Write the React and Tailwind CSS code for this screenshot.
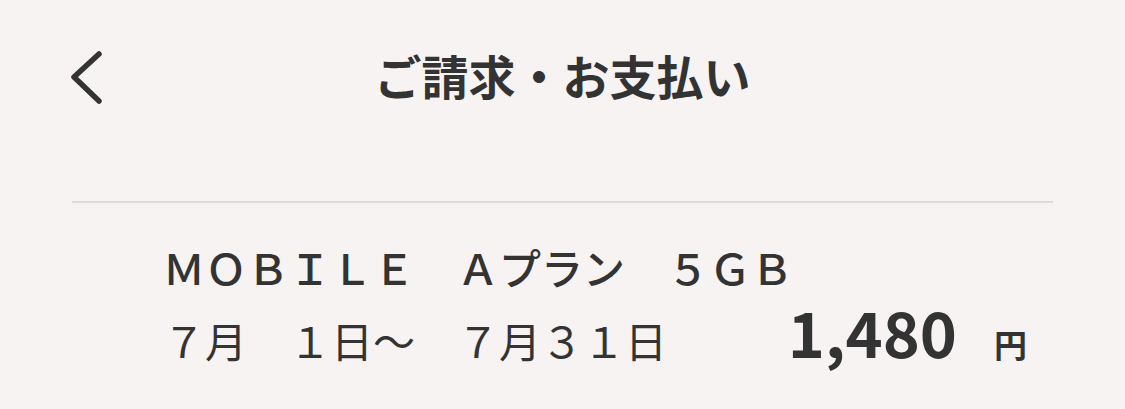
const FONT = "font-['Noto_Sans_CJK_JP','Noto_Sans',sans-serif]";

const BackIcon = () => (
  <svg width="40" height="60" viewBox="0 0 40 60" fill="none">
    <path
      d="M31 6 L6 29 L31 53"
      stroke="#333333"
      strokeWidth="5.5"
      strokeLinecap="round"
      strokeLinejoin="round"
    />
  </svg>
);

export default function App() {
  return (
    <div className={`h-[409px] w-full overflow-hidden bg-[#f6f3f2] text-[#333333] ${FONT}`}>
      <header className="grid h-[148px] grid-cols-[1fr_auto_1fr] items-center">
        <div className="pl-[68px] pt-[8px]">
          <BackIcon />
        </div>
        <h1 className="text-[47px] font-bold leading-none">ご請求・お支払い</h1>
        <div />
      </header>

      <div className="mx-[72px] mt-[53px] border-t-2 border-[#dddad9]" />

      <div className="pl-[163px] pr-[98px] pt-[43px]">
        <p className="text-[42px] font-medium leading-none">ＭＯＢＩＬＥ　Ａプラン　５ＧＢ</p>
        <div className="mt-[11px] flex items-baseline justify-between">
          <p className="text-[42px] leading-none">７月　１日～　７月３１日</p>
          <div className="flex items-baseline gap-[37px]">
            <span className="text-[63px] font-bold leading-none">1,480</span>
            <span className="text-[33px] font-bold leading-none">円</span>
          </div>
        </div>
      </div>
    </div>
  );
}
